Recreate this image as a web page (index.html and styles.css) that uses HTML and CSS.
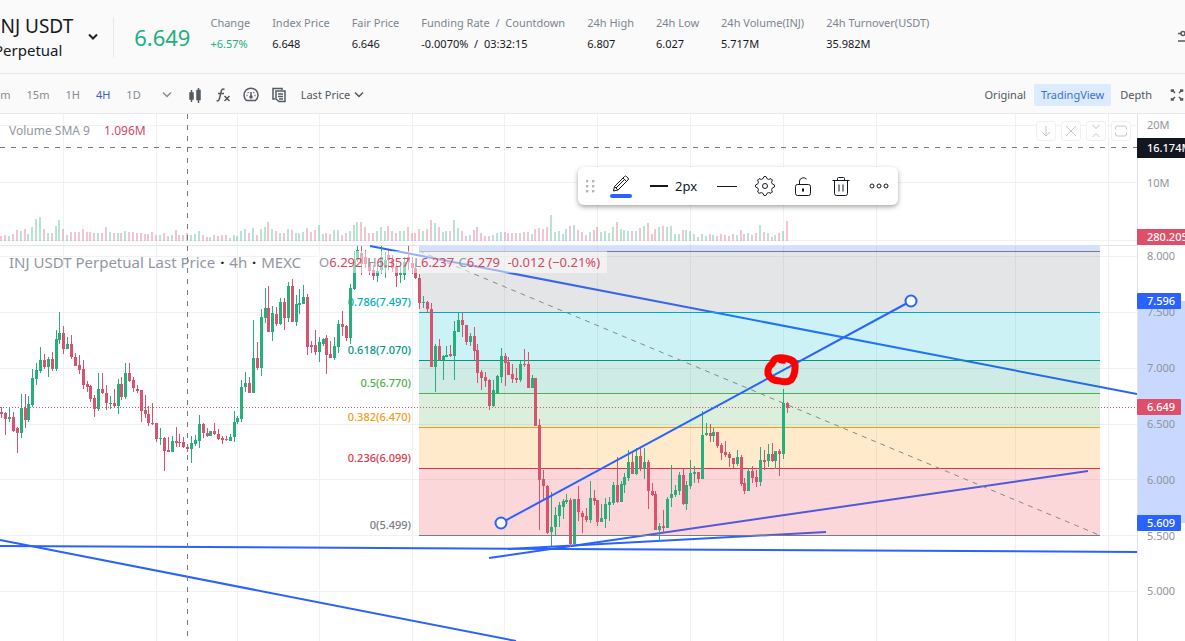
FILE: index.html
```html
<!DOCTYPE html>
<html lang="en">
<head>
    <meta charset="UTF-8">
    <meta name="viewport" content="width=device-width, initial-scale=1.0">
    <title>INJ USDT Perpetual</title>
    <link rel="stylesheet" href="styles.css">
</head>
<body>
    <header class="header">
        <div class="pair">
            <h1>INJ USDT</h1>
            <span>Perpetual</span>
        </div>
        <button class="icon-btn pair-toggle" aria-label="Select pair">
            <svg width="12" height="8" viewBox="0 0 12 8"><path d="M2 1.500l4 4 4-4"/></svg>
        </button>
        <div class="last-price">6.649</div>
        <dl class="stats">
            <div><dt>Change</dt><dd class="up">+6.57%</dd></div>
            <div><dt>Index Price</dt><dd>6.648</dd></div>
            <div><dt>Fair Price</dt><dd>6.646</dd></div>
            <div><dt>Funding Rate&nbsp; /&nbsp; Countdown</dt><dd>-0.0070%&nbsp; /&nbsp; 03:32:15</dd></div>
            <div><dt>24h High</dt><dd>6.807</dd></div>
            <div><dt>24h Low</dt><dd>6.027</dd></div>
            <div><dt>24h Volume(INJ)</dt><dd>5.717M</dd></div>
            <div><dt>24h Turnover(USDT)</dt><dd>35.982M</dd></div>
        </dl>
        <button class="icon-btn settings" aria-label="Settings">
            <svg width="18" height="14" viewBox="0 0 18 14"><path d="M1 3.500h3M8 3.500h9M1 11h9M14 11h3"/><circle cx="6" cy="3.500" r="2"/><circle cx="12" cy="11" r="2"/></svg>
        </button>
    </header>

    <nav class="toolbar">
        <div class="intervals">
            <button>5m</button>
            <button>15m</button>
            <button>1H</button>
            <button class="active">4H</button>
            <button>1D</button>
        </div>
        <div class="tools">
            <button class="icon-btn light" aria-label="More intervals">
                <svg width="16" height="16" viewBox="0 0 16 16"><path d="M4 5.500l4 4 4-4"/></svg>
            </button>
            <button class="icon-btn" aria-label="Chart type">
                <svg width="16" height="16" viewBox="0 0 16 16"><path d="M4.500 3v12M11.500 1v15"/><path class="solid" d="M3 6h3v6H3zM10 3.500h3v9h-3z"/></svg>
            </button>
            <button class="icon-btn" aria-label="Indicators">
                <svg width="16" height="16" viewBox="0 0 16 16"><path d="M9.500 2.500C7.500 1.500 6.500 2.500 6 5L4.500 11.500C4 13.500 3 14.500 1.500 13.500M3 6.500h6M9.500 9l5 5M14.500 9l-5 5"/></svg>
            </button>
            <button class="icon-btn" aria-label="Market mood">
                <svg width="16" height="16" viewBox="0 0 16 16"><path d="M3.500 13.500A7 7 0 1 1 12.500 13.500zM8 10V5M3.500 8.500h1M11.500 8.500h1M4.800 5.300l.7.700M11.200 5.300l-.7.700"/><circle class="solid" cx="8" cy="10" r="1"/></svg>
            </button>
            <button class="icon-btn" aria-label="Orders">
                <svg width="16" height="16" viewBox="0 0 16 16"><path d="M4 12H2V1.500h9V3M5 4h9v10.500H8L5 12zM7 7h5M7 9.500h5M8 12h4"/></svg>
            </button>
        </div>
        <div class="price-type">
            <select aria-label="Price type">
                <option>Last Price</option>
                <option>Fair Price</option>
            </select>
            <svg width="12" height="8" viewBox="0 0 12 8"><path d="M2 1.500l4 4 4-4"/></svg>
        </div>
        <div class="views">
            <button>Original</button>
            <button class="selected">TradingView</button>
            <button>Depth</button>
        </div>
        <button class="icon-btn expand" aria-label="Full screen">
            <svg width="14" height="14" viewBox="0 0 14 14"><path d="M1.500 4V2H4M2 2l3 3M10 2h2.500v2M12 2L9 5M1.500 10v2H4M2 12l3-3M12.500 10v2H10M12 12L9 9"/></svg>
        </button>
    </nav>

    <main class="chart">
        <div class="plot">
            <svg id="plot" class="canvas" role="img" aria-label="INJ USDT 4h chart"></svg>

            <p class="legend volume-legend">Volume SMA 9 <b>1.096M</b></p>
            <div class="legend price-legend">
                <h2>INJ USDT Perpetual Last Price <i>·</i> 4h <i>·</i> MEXC</h2>
                <p class="ohlc">O<b>6.292</b> H<b>6.357</b> L<b>6.237</b> C<b>6.279</b> <b class="diff">-0.012 (−0.21%)</b></p>
            </div>

            <div class="pane-buttons">
                <button aria-label="Move pane down"><svg width="14" height="14" viewBox="0 0 14 14"><path d="M7 2v10M3 8l4 4 4-4"/></svg></button>
                <button aria-label="Delete pane"><svg width="14" height="14" viewBox="0 0 14 14"><path d="M2 2l10 10M12 2L2 12"/></svg></button>
                <button aria-label="Collapse pane"><svg width="14" height="14" viewBox="0 0 14 14"><path d="M3.500 1L7 4.500 10.500 1M3.500 13L7 9.500l3.500 3.500"/></svg></button>
                <button aria-label="Maximize pane"><svg width="14" height="14" viewBox="0 0 14 14"><path d="M1.500 5.500V4q0-2 2-2h7q2 0 2 2v1.500M1.500 8.500V10q0 2 2 2h7q2 0 2-2V8.500"/></svg></button>
            </div>

            <div class="draw-bar">
                <span class="grip"></span>
                <button class="color" aria-label="Line color">
                    <svg width="22" height="17" viewBox="0 0 22 17"><path d="M3.500 16l1-4.500L14.500 1.500q1-1 2 0l1.500 1.500q1 1 0 2L8 15zM4.500 11.500L8 15M13 3l3.500 3.500M6 13l9-9"/></svg>
                </button>
                <button class="width"><span class="stroke"></span>2px</button>
                <button class="action" aria-label="Line style"><span class="stroke thin"></span></button>
                <button class="action" aria-label="Settings">
                    <svg id="gear" width="22" height="22" viewBox="0 0 22 22"><circle cx="11" cy="11" r="2.500"/></svg>
                </button>
                <button class="action" aria-label="Lock">
                    <svg width="20" height="22" viewBox="0 0 20 22"><rect x="2.500" y="9.500" width="15" height="11" rx="2"/><path d="M6.500 9.500V6a4 3.500 0 0 1 7-2"/><path class="bold" d="M10 13.500v3"/></svg>
                </button>
                <button class="action" aria-label="Remove">
                    <svg width="18" height="22" viewBox="0 0 18 22"><path d="M.5 5.500h17M5.500 5.500v-2q0-1 1-1h5q1 0 1 1v2M2.500 5.500v13q0 2 2 2h9q2 0 2-2v-13M7 9.500v7M11 9.500v7"/></svg>
                </button>
                <button class="action" aria-label="More">
                    <svg width="20" height="6" viewBox="0 0 20 6"><circle cx="3" cy="3" r="2"/><circle cx="10" cy="3" r="2"/><circle cx="17" cy="3" r="2"/></svg>
                </button>
            </div>
        </div>
        <svg id="axis" class="axis" role="img" aria-label="Price axis"></svg>
    </main>

    <script src="chart.js"></script>
</body>
</html>
```
FILE: styles.css
```css
* {
    box-sizing: border-box;
}

body {
    margin: 0;
    min-height: 100vh;
    display: flex;
    flex-direction: column;
    overflow: hidden;
    background-color: #fff;
    color: #16181d;
    font-family: "Noto Sans", sans-serif;
    font-size: 11px;
}

h1, h2, p, dl, dd {
    margin: 0;
    font-weight: 400;
}

button, select {
    font: inherit;
    color: inherit;
    padding: 0;
    border: none;
    background: none;
    cursor: pointer;
}

svg {
    display: block;
    fill: none;
    stroke: currentColor;
}

/* header */
.header {
    height: 74px;
    display: flex;
    align-items: center;
    margin-left: -6px;
    background-color: #fafafa;
    border-bottom: 1px solid #e6e8ea;
}

.pair h1 {
    font-size: 19px;
    line-height: 26px;
}

.pair span {
    display: block;
    font-size: 15px;
    line-height: 22px;
}

.icon-btn {
    display: flex;
    color: #555a60;
    stroke-width: 2;
}

.pair-toggle {
    margin-left: 14px;
    color: #222;
}

.last-price {
    margin-left: 14px;
    padding: 0 20px;
    border-left: 1px solid #e6e8ea;
    color: #23b07c;
    font-size: 22px;
    line-height: 40px;
}

.stats {
    display: flex;
    gap: 22px;
    padding-bottom: 8px;
    white-space: nowrap;
}

.stats dt {
    color: #7c858f;
    line-height: 21px;
}

.stats dd {
    line-height: 21px;
}

.stats .up {
    color: #23b07c;
}

.settings {
    margin-left: auto;
    margin-right: -10px;
}

.settings svg {
    stroke-width: 1.5;
}

/* interval toolbar */
.toolbar {
    height: 40px;
    display: flex;
    align-items: center;
    padding-top: 2px;
    background-color: #fafafa;
    border-bottom: 1px solid #e6e8ea;
    color: #50565e;
    white-space: nowrap;
}

.intervals {
    display: flex;
    gap: 16px;
    margin-left: -6px;
    color: #848b94;
}

.intervals .active {
    color: #3c62bd;
}

.tools {
    display: flex;
    gap: 12px;
    margin-left: 18px;
}

.tools svg {
    stroke-width: 1.5;
}

.tools .light {
    color: #848b94;
}

.solid {
    fill: currentColor;
}

.price-type {
    display: flex;
    align-items: center;
    gap: 2px;
    margin-left: 14px;
    stroke-width: 1.5;
}

.price-type select {
    appearance: none;
}

.views {
    display: flex;
    gap: 8px;
    margin-left: auto;
}

.views button {
    line-height: 22px;
}

.views .selected {
    padding: 0 7px;
    margin-right: 1px;
    border-radius: 2px;
    background-color: #dcebfd;
    color: #3c6fd6;
}

.expand {
    margin: 0 1px 0 18px;
}

.expand svg {
    stroke-width: 1.5;
}

/* chart */
.chart {
    flex: 1;
    display: flex;
    min-height: 527px;
}

.plot {
    flex: 1;
    min-width: 0;
    position: relative;
    overflow: hidden;
}

.canvas {
    position: absolute;
    top: 0;
    left: 0;
    width: 100%;
    height: 100%;
    stroke: none;
}

.axis {
    width: 48px;
    height: auto;
    stroke: none;
    font-size: 11px;
}

.grid {
    stroke: #f0f1f3;
    shape-rendering: crispEdges;
}

.divider {
    stroke: #e0e3eb;
    shape-rendering: crispEdges;
}

.bull {
    fill: #26ae7b;
}

.bear {
    fill: #d9536f;
}

.volume {
    opacity: 0.33;
}

.trend {
    stroke: #2962ff;
    stroke-width: 2;
}

.anchor {
    fill: #fff;
    stroke: #2962ff;
    stroke-width: 2;
}

.fib-label {
    font-size: 11px;
    font-weight: 500;
    text-anchor: end;
}

.fib-diagonal {
    stroke: #888;
    stroke-dasharray: 5 5;
}

.price-line {
    stroke: #c65b70;
    stroke-dasharray: 1 2;
    shape-rendering: crispEdges;
}

.crosshair {
    stroke: #75787f;
    stroke-dasharray: 5 6;
    shape-rendering: crispEdges;
}

.marker {
    fill: none;
    stroke: #f00;
    stroke-width: 7;
    stroke-linejoin: round;
}

.tick {
    fill: #8f949c;
}

.tag-text {
    fill: #fff;
    font-weight: 500;
}

.legend {
    position: absolute;
    left: 9px;
    color: #92979f;
    font-size: 12px;
    white-space: nowrap;
}

.legend b {
    font-weight: 400;
    color: #cf4964;
}

.volume-legend {
    top: 8px;
    line-height: 18px;
}

.volume-legend b {
    margin-left: 11px;
}

.price-legend {
    top: 137px;
    display: flex;
    align-items: center;
    gap: 12px;
}

.price-legend h2 {
    font-size: 15px;
    line-height: 22px;
}

.price-legend i {
    margin: 0 1px;
    color: #222;
    font-weight: 700;
    font-style: normal;
}

.ohlc {
    padding: 0 6px;
    background-color: rgba(255, 255, 255, 0.5);
    font-size: 13px;
    line-height: 22px;
}

.ohlc b {
    margin-right: 1px;
}

.ohlc .diff {
    margin-left: 3px;
}

.pane-buttons {
    position: absolute;
    top: 7px;
    right: 6px;
    display: flex;
    gap: 5px;
}

.pane-buttons button {
    width: 20px;
    height: 20px;
    display: grid;
    place-items: center;
    border: 1px solid #f0f1f3;
    border-radius: 3px;
    background-color: #fff;
    color: #c3c6cc;
}

.draw-bar {
    position: absolute;
    top: 53px;
    left: 578px;
    width: 320px;
    height: 38px;
    display: flex;
    align-items: center;
    padding-left: 8px;
    border-radius: 6px;
    background-color: #fff;
    box-shadow: 0 2px 5px rgba(0, 0, 0, 0.35);
    color: #131722;
    font-size: 13px;
}

.draw-bar button {
    display: flex;
    align-items: center;
}

.draw-bar .action {
    width: 38px;
    justify-content: center;
}

.grip {
    width: 9px;
    height: 13px;
    background: radial-gradient(circle at 1px 1px, #b2b5be 1px, transparent 2px) 0 0 / 6px 5px;
}

.draw-bar .color {
    flex-direction: column;
    gap: 2px;
    margin: 0 18px 0 15px;
}

.draw-bar .color::after {
    content: "";
    width: 22px;
    height: 4px;
    border-radius: 2px;
    background-color: #2962ff;
}

.draw-bar .width {
    gap: 7px;
    margin-right: auto;
}

.stroke {
    width: 18px;
    height: 2px;
    background-color: #131722;
}

.stroke.thin {
    width: 20px;
    height: 1px;
}

.bold {
    stroke-width: 2;
}
```
FILE: chart.js
```js
// Candles as [high, body top, body bottom, low, direction], in pixels below the window top
const candles = [
    [407,412,414,418,0],[412,413,419,435,0],[407,417,419,422,1],[412,417,431,432,0],[427,428,433,453,0],[394,408,433,438,1],
    [394,408,420,428,0],[396,404,420,422,1],[369,378,405,407,1],[363,370,379,385,1],[347,360,371,373,1],[354,360,367,369,0],
    [357,359,367,377,1],[352,359,369,371,0],[330,339,369,371,1],[312,333,340,344,1],[326,333,349,354,0],[337,344,349,349,1],
    [335,344,357,359,0],[353,357,366,366,0],[355,365,370,374,0],[360,369,385,389,0],[381,384,387,392,0],[385,386,399,402,0],
    [395,398,409,417,0],[373,389,409,411,1],[373,389,393,394,0],[385,393,403,410,0],[396,403,404,409,1],[389,403,406,407,0],
    [379,384,406,414,1],[377,384,397,400,0],[363,373,397,399,1],[363,373,381,382,0],[377,380,388,392,0],[385,389,391,393,0],
    [390,390,411,422,0],[395,410,414,418,0],[406,414,423,426,0],[403,423,424,425,0],[423,423,439,442,0],[428,438,439,445,1],
    [437,438,451,471,0],[437,450,452,452,0],[436,441,452,452,1],[427,441,443,447,0],[434,442,443,447,0],[437,442,447,448,0],
    [447,447,449,452,0],[436,443,449,463,1],[435,440,444,446,1],[415,424,441,448,1],[423,424,433,438,0],[428,433,436,437,0],
    [431,431,436,436,1],[423,431,434,435,0],[429,434,439,440,0],[436,438,440,444,0],[436,439,440,441,0],[434,437,441,441,1],
    [411,422,437,442,1],[416,418,422,424,1],[380,387,419,422,1],[372,383,387,392,1],[377,383,393,393,0],[320,358,393,393,1],
    [342,358,368,370,0],[309,317,368,376,1],[288,308,318,323,1],[286,308,332,332,0],[306,313,332,341,1],[307,314,324,326,0],
    [298,302,324,325,1],[298,302,318,330,0],[282,286,318,322,1],[279,286,322,322,0],[295,304,322,326,1],[289,303,305,314,1],
    [285,297,304,304,1],[294,297,347,355,0],[341,345,347,353,0],[330,345,352,355,0],[337,342,352,362,1],[338,339,344,346,1],
    [335,338,355,374,0],[341,354,358,358,0],[337,346,358,360,1],[320,324,347,353,1],[311,324,327,336,0],[325,326,338,341,0],
    [284,288,338,344,1],[251,260,289,290,1],[246,250,260,262,1],[246,253,264,275,0],[250,257,264,268,0],[258,262,271,275,0],
    [265,270,276,280,0],[265,271,276,282,1],[246,257,270,274,1],[252,260,268,278,1],[250,255,260,270,0],[255,260,268,272,0],
    [263,267,276,287,0],[265,273,275,283,1],[257,262,275,280,1],[246,257,262,270,0],[257,263,268,274,0],[263,268,278,279,0],
    [274,278,303,309,0],[296,302,303,308,1],[301,302,309,313,0],[303,309,367,367,0],[344,346,367,392,1],[339,346,360,361,0],
    [355,356,360,380,1],[346,355,357,357,1],[345,354,356,357,0],[321,331,356,380,1],[313,320,332,332,1],[313,320,325,337,0],
    [325,325,342,345,0],[333,336,342,346,1],[327,336,351,360,0],[344,350,373,383,0],[370,372,378,390,0],[372,377,381,387,0],
    [379,380,406,410,0],[380,390,406,407,1],[375,376,393,394,1],[348,356,377,383,1],[353,356,363,386,0],[357,362,375,375,0],
    [364,374,379,383,0],[368,378,380,383,0],[361,364,380,382,1],[349,364,365,367,0],[352,364,388,388,0],[375,378,388,388,1],
    [378,378,426,426,0],[419,425,480,530,0],[470,479,486,500,0],[485,486,533,534,0],[492,527,532,546,1],[507,515,527,535,1],
    [502,505,516,527,1],[499,501,507,519,1],[494,500,502,504,1],[498,500,544,547,0],[499,499,544,544,1],[486,499,512,521,0],
    [511,513,517,533,0],[508,516,520,522,0],[481,498,520,523,1],[490,498,501,505,0],[500,500,522,526,0],[504,518,522,522,1],
    [498,504,519,528,1],[497,502,505,521,1],[482,485,503,505,1],[457,485,502,503,0],[481,484,502,502,1],[473,477,485,493,1],
    [450,462,478,481,1],[451,462,474,474,0],[448,456,474,475,1],[448,456,469,471,0],[448,462,469,479,1],[460,462,491,509,0],
    [483,491,495,496,0],[491,494,530,530,0],[523,526,530,541,1],[510,526,528,534,0],[497,499,528,528,1],[465,494,498,507,1],
    [485,490,495,497,1],[472,475,491,495,1],[468,475,504,505,0],[481,485,504,510,1],[460,473,486,489,1],[466,472,474,483,1],
    [472,472,479,483,0],[411,435,479,479,1],[423,433,435,436,1],[424,433,436,442,0],[428,432,436,442,1],[432,432,446,448,0],
    [443,445,453,460,0],[441,452,455,457,0],[452,454,458,467,0],[458,458,464,468,0],[450,457,464,466,1],[455,457,484,486,0],
    [478,483,491,494,0],[468,471,491,491,1],[466,471,478,483,0],[470,477,482,487,0],[447,460,482,486,1],[450,460,462,470,0],
    [444,454,461,467,1],[443,454,461,462,0],[451,451,461,469,1],[449,451,454,476,0],[389,403,454,459,1],[402,403,408,413,0]
];

const volumes = [
    5,6,5,7,11,10,12,7,14,22,24,12,8,8,15,21,12,6,9,9,9,12,9,9,8,8,8,14,9,8,8,
    8,10,9,9,8,8,7,7,9,6,6,8,5,6,11,6,6,8,6,7,10,6,4,4,6,5,6,6,3,6,5,
    10,12,8,13,6,12,14,19,12,10,8,8,12,11,8,8,9,13,9,11,16,7,8,7,11,11,6,8,10,16,19,19,14,8,8,10,14,10,15,10,8,10,10,14,8,8,
    12,10,12,21,18,14,9,10,10,21,13,10,5,6,11,14,8,5,5,6,8,9,9,8,8,8,8,9,9,7,12,13,12,14,26,9,10,
    7,12,15,16,11,9,6,9,11,14,9,10,8,14,19,12,11,10,10,10,13,15,18,7,12,14,15,14,15,7,7,11,11,10,7,4,
    7,5,7,6,5,7,6,5,7,6,11,7,8,6,8,16,9,8,4,6,8,10,20,3
];

const TOP = document.querySelector('.chart').offsetTop;
const SVG = 'http://www.w3.org/2000/svg';

function add(parent, tag, attrs, text) {
    const el = document.createElementNS(SVG, tag);
    for (const key in attrs) el.setAttribute(key, attrs[key]);
    if (text) el.textContent = text;
    parent.appendChild(el);
    return el;
}

function line(parent, cls, x1, y1, x2, y2) {
    return add(parent, 'line', { class: cls, x1, y1, x2, y2 });
}

const plot = add(document.getElementById('plot'), 'g', { transform: `translate(0 ${-TOP})` });

// Grid
[63, 156, 237, 319, 412, 504, 597, 690, 783, 876, 1015, 1108].forEach(x => line(plot, 'grid', x + 0.5, TOP, x + 0.5, 2000));
[125, 182, 240, 256, 312, 368, 424, 479, 535, 591].forEach(y => line(plot, 'grid', 0, y + 0.5, 3000, y + 0.5));
line(plot, 'divider', 0, 245.5, 3000, 245.5);

// Trend lines below the fibonacci bands
line(plot, 'trend', 370, 246, 1137, 394);
line(plot, 'trend', 0, 546, 1137, 552);
line(plot, 'trend', 0, 540, 516, 641);
line(plot, 'trend', 489, 558, 1088, 471);
line(plot, 'trend', 508, 549, 826, 532);

// Fibonacci retracement
const levels = [
    [251, '#787b86', ''],
    [312, '#00acc1', '0.786(7.497)'],
    [360, '#009688', '0.618(7.070)'],
    [393, '#4caf50', '0.5(6.770)'],
    [427, '#f39c12', '0.382(6.470)'],
    [468, '#e0364c', '0.236(6.099)'],
    [535, '#787b86', '0(5.499)']
];
const bands = ['#2962ff', '#787b86', '#00bcd4', '#089981', '#4caf50', '#ff9800', '#f23645'];
let bandTop = 246;
levels.forEach(([y], i) => {
    add(plot, 'rect', { x: 419, y: bandTop, width: 681, height: y - bandTop, fill: bands[i], 'fill-opacity': 0.2 });
    bandTop = y;
});
levels.forEach(([y, color, label]) => {
    add(plot, 'rect', { x: 419, y, width: 681, height: 1, fill: color });
    if (label) add(plot, 'text', { class: 'fib-label', x: 411, y: y - 6, fill: color }, label);
});
line(plot, 'fib-diagonal', 419, 251, 1099, 535);

// Candles and volume bars
candles.forEach(([high, top, bottom, low, up], i) => {
    const x = Math.round(1.4 + i * 3.87);
    const cls = up ? 'bull' : 'bear';
    add(plot, 'rect', { class: cls, x, y: high, width: 1, height: Math.max(low - high, 1) });
    add(plot, 'rect', { class: cls, x: x - 1, y: top, width: 3, height: Math.max(bottom - top, 1) });
    add(plot, 'rect', { class: cls + ' volume', x: x - 1, y: 241 - volumes[i], width: 2, height: volumes[i] });
});

line(plot, 'price-line', 0, 407.5, 3000, 407.5);

// Selected trend line
line(plot, 'trend', 501, 523, 911, 301);
add(plot, 'circle', { class: 'anchor', cx: 501, cy: 523, r: 5.5 });
add(plot, 'circle', { class: 'anchor', cx: 911, cy: 301, r: 5.5 });

// Hand-drawn circle
add(plot, 'path', { class: 'marker', d: 'M778 358Q784 357 788 359Q796 361 795 368Q795 375 791 380Q787 383 780 381Q771 381 768 374Q767 367 772 364Q774 358 779 358Q781 361 785 360' });

line(plot, 'crosshair', 187.5, TOP, 187.5, 2000);
line(plot, 'crosshair', 0, 147.5, 3000, 147.5);

// Price axis
const axis = add(document.getElementById('axis'), 'g', { transform: `translate(0 ${-TOP})` });
line(axis, 'divider', 0.5, TOP, 0.5, 2000);
add(axis, 'rect', { x: 1, y: 301, width: 47, height: 222, fill: '#2962ff', 'fill-opacity': 0.25 });
[['20M', 125], ['10M', 183], ['8.000', 256], ['7.500', 312], ['7.000', 368], ['6.500', 424], ['6.000', 480], ['5.500', 536], ['5.000', 591]]
    .forEach(([text, y]) => add(axis, 'text', { class: 'tick', x: 10, y: y + 4 }, text));

function tag(text, y, height, color, width) {
    add(axis, 'rect', { x: 0, y: y - height / 2, width, height, rx: width < 48 ? 1 : 0, fill: color });
    add(axis, 'text', { class: 'tag-text', x: 10, y: y + 4 }, text);
}
tag('16.174M', 148, 20, '#131722', 60);
tag('280.205K', 237, 16, '#e04f69', 60);
tag('7.596', 301, 16, '#2962ff', 44);
tag('6.649', 407, 16, '#e04f69', 44);
tag('5.609', 523, 16, '#2962ff', 44);

// Gear outline with eight teeth
const points = [];
for (let i = 0; i < 32; i++) {
    const r = i % 4 < 2 ? 9.5 : 7.5;
    const a = (i - 0.5) * Math.PI / 16;
    points.push((11 + r * Math.cos(a)).toFixed(1) + ',' + (11 + r * Math.sin(a)).toFixed(1));
}
add(document.getElementById('gear'), 'polygon', { points: points.join(' '), 'stroke-linejoin': 'round' });
```
